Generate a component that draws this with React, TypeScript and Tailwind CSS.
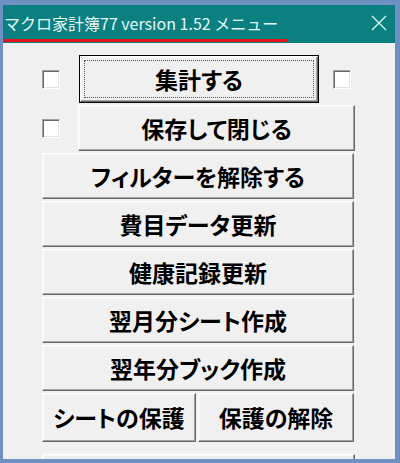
import React from 'react';

const jp = "font-['Noto_Sans_CJK_JP','Noto_Sans',sans-serif]";

// Classic Windows-style 3D push button
const bevel =
  'border border-t-white border-l-white border-b-[#696969] border-r-[#696969] shadow-[inset_-1px_-1px_0_#a0a0a0,inset_1px_1px_0_#f8f8f8]';

const label = `text-[23px] font-bold leading-none text-black [font-feature-settings:'palt'] ${jp}`;

function MenuButton({ text, className = '' }: { text: string; className?: string }) {
  return (
    <button className={`flex items-center justify-center bg-[#f0f0f0] ${label} ${bevel} ${className}`}>
      {text}
    </button>
  );
}

function DefaultButton({ text, className = '' }: { text: string; className?: string }) {
  return (
    <button className={`border border-black bg-[#f0f0f0] p-0 ${className}`}>
      <div className={`h-full w-full p-[3px] ${bevel}`}>
        <div className={`flex h-full w-full items-center justify-center border border-dotted border-[#555] ${label}`}>
          {text}
        </div>
      </div>
    </button>
  );
}

function CheckBox() {
  return (
    <div className="h-[19px] w-[18px] shrink-0 border border-t-[#a0a0a0] border-l-[#a0a0a0] border-b-white border-r-white bg-white shadow-[inset_1px_1px_0_#696969,inset_-1px_-1px_0_#e3e3e3]" />
  );
}

export default function App() {
  return (
    <div className="h-[463px] w-[400px] overflow-hidden bg-[#6f90c2] pb-[4px] pl-[3px] pr-[5px] pt-[5px]">
      <div className="flex h-full flex-col">
        {/* Title bar */}
        <div className="flex h-[38px] shrink-0 flex-col bg-[#0b8080]">
          <div className="flex h-[34px] items-center justify-between pl-[1px] pr-[7px]">
            <span className={`pt-[1px] text-[16px] leading-none text-[#e6f7f7] ${jp}`}>
              マクロ家計簿77 version 1.52 メニュー
            </span>
            <svg width="18" height="18" viewBox="0 0 18 18" className="mt-[2px]">
              <path d="M2 2 L16 16 M16 2 L2 16" stroke="#d8f0f0" strokeWidth="1.4" />
            </svg>
          </div>
          <div className="h-[3px] w-[284px] bg-[#e8141c]" />
        </div>

        {/* Content */}
        <div className="flex flex-1 flex-col overflow-hidden bg-[#f0f0f0] pl-[39px] pt-[12px]">
          <div className="flex h-[48px] items-center">
            <CheckBox />
            <DefaultButton text="集計する" className="ml-[19px] h-[48px] w-[240px]" />
            <div className="ml-[14px]">
              <CheckBox />
            </div>
          </div>
          <div className="mt-[2px] flex h-[46px] items-center">
            <CheckBox />
            <MenuButton text="保存して閉じる" className="ml-[18px] h-[46px] w-[277px]" />
          </div>
          <div className="mt-[2px] flex w-[312px] flex-col gap-[2px]">
            <MenuButton text="フィルターを解除する" className="h-[46px] w-full" />
            <MenuButton text="費目データ更新" className="h-[46px] w-full" />
            <MenuButton text="健康記録更新" className="h-[46px] w-full" />
            <MenuButton text="翌月分シート作成" className="h-[46px] w-full" />
            <MenuButton text="翌年分ブック作成" className="h-[46px] w-full" />
            <div className="flex h-[49px] gap-[2px]">
              <MenuButton text="シートの保護" className="h-full w-[154px]" />
              <MenuButton text="保護の解除" className="h-full flex-1" />
            </div>
            <MenuButton text="" className="mt-[10px] h-[46px] w-[313px] shrink-0" />
          </div>
        </div>
      </div>
    </div>
  );
}
